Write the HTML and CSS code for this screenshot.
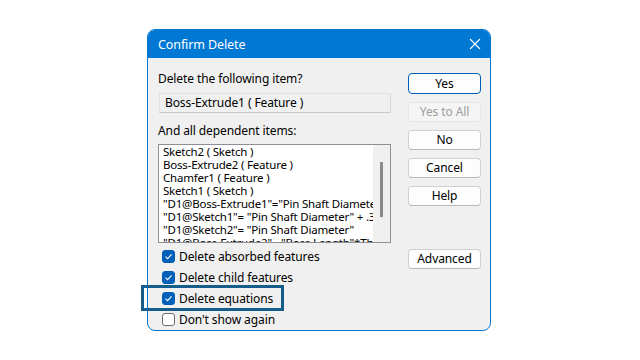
FILE: index.html
```html
<!DOCTYPE html>
<html>
<head>
<meta charset="utf-8">
<link rel="stylesheet" href="styles.css">
</head>
<body>
<div class="stage">
  <div class="dialog">
    <div class="titlebar">
      <span class="title">Confirm Delete</span>
      <svg class="close" width="12" height="12" viewBox="0 0 12 12"><path d="M1 1L11 11M11 1L1 11" stroke="#fff" stroke-width="1.1" fill="none"/></svg>
    </div>
    <div class="body">
      <div class="left">
        <div class="label first">Delete the following item?</div>
        <div class="itembox">Boss-Extrude1 ( Feature )</div>
        <div class="label second">And all dependent items:</div>
        <div class="listbox">
          <div class="lines">
            <div>Sketch2 ( Sketch )</div>
            <div>Boss-Extrude2 ( Feature )</div>
            <div>Chamfer1 ( Feature )</div>
            <div>Sketch1 ( Sketch )</div>
            <div>"D1@Boss-Extrude1"="Pin Shaft Diameter"</div>
            <div>"D1@Sketch1"= "Pin Shaft Diameter" + .3</div>
            <div>"D1@Sketch2"= "Pin Shaft Diameter"</div>
            <div>"D1@Boss-Extrude2"= "Boss Length"*The</div>
          </div>
          <div class="scroll"><div class="thumb"></div></div>
        </div>
        <div class="checks">
          <label class="check"><span class="box on"><svg width="9" height="9" viewBox="0 0 9 9"><path d="M1.5 4.6L3.6 6.6L7.6 2.4" stroke="#fff" stroke-width="1.1" fill="none"/></svg></span>Delete absorbed features</label>
          <label class="check"><span class="box on"><svg width="9" height="9" viewBox="0 0 9 9"><path d="M1.5 4.6L3.6 6.6L7.6 2.4" stroke="#fff" stroke-width="1.1" fill="none"/></svg></span>Delete child features</label>
          <label class="check"><span class="box on"><svg width="9" height="9" viewBox="0 0 9 9"><path d="M1.5 4.6L3.6 6.6L7.6 2.4" stroke="#fff" stroke-width="1.1" fill="none"/></svg></span>Delete equations</label>
          <label class="check"><span class="box"></span>Don't show again</label>
        </div>
      </div>
      <div class="right">
        <div class="btn default">Yes</div>
        <div class="btn disabled">Yes to All</div>
        <div class="btn">No</div>
        <div class="btn">Cancel</div>
        <div class="btn">Help</div>
        <div class="btn advanced">Advanced</div>
      </div>
    </div>
  </div>
  <div class="highlight"></div>
</div>
</body>
</html>
```
FILE: styles.css
```css
html, body {
  margin: 0;
  padding: 0;
  background: #ffffff;
  width: 640px;
  height: 360px;
  overflow: hidden;
}
body {
  font-family: "Noto Sans", "Open Sans", sans-serif;
  font-size: 12px;
  color: #000;
}
.stage {
  position: relative;
  padding: 29px 0 0 147px;
}
.dialog {
  width: 344px;
  height: 302px;
  box-sizing: border-box;
  border: 1px solid #0078d4;
  border-radius: 8px;
  background: #f0f0f0;
  overflow: hidden;
  display: flex;
  flex-direction: column;
}
.titlebar {
  height: 28px;
  background: #0078d4;
  display: flex;
  align-items: center;
  justify-content: space-between;
  padding: 0 9px 0 10px;
  color: #fff;
  flex-shrink: 0;
}
.title {
  font-size: 12.5px;
  letter-spacing: -0.1px;
}
.close {
  display: block;
}
.body {
  display: flex;
  padding: 0 0 0 10px;
}
.left {
  width: 233px;
  display: flex;
  flex-direction: column;
}
.label {
  height: 16px;
  line-height: 16px;
  letter-spacing: -0.1px;
}
.label.first {
  margin-top: 13px;
  margin-bottom: 6px;
}
.label.second {
  margin-top: 10px;
  margin-bottom: 5px;
}
.itembox {
  height: 20px;
  box-sizing: border-box;
  border: 1px solid #e0e0e0;
  border-bottom-color: #c8c8c8;
  border-right-color: #d8d8d8;
  background: #f0f0f0;
  padding-left: 5px;
  line-height: 18px;
  margin-left: 1px;
  width: 232px;
  letter-spacing: -0.1px;
}
.listbox {
  height: 99px;
  box-sizing: border-box;
  border: 1px solid #8e8f94;
  background: #fff;
  display: flex;
  overflow: hidden;
}
.lines {
  flex: 1;
  padding: 0 0 0 4px;
  font-size: 11.5px;
  line-height: 13px;
  white-space: nowrap;
  overflow: hidden;
  letter-spacing: -0.2px;
}
.scroll {
  width: 17px;
  background: #f0f0f0;
  position: relative;
}
.thumb {
  width: 3px;
  height: 55px;
  background: #8a8a8a;
  margin: 17px 0 0 7px;
}
.checks {
  display: flex;
  flex-direction: column;
  margin-top: 3px;
}
.check {
  height: 21px;
  display: flex;
  align-items: center;
  padding-left: 4px;
  letter-spacing: -0.1px;
}
.box {
  width: 13px;
  height: 13px;
  box-sizing: border-box;
  border-radius: 3px;
  border: 1px solid #6c6c6c;
  background: #fff;
  margin-right: 4px;
  display: flex;
  align-items: center;
  justify-content: center;
}
.box.on {
  background: #005fb8;
  border-color: #005fb8;
}
.box svg {
  display: block;
}
.right {
  margin-left: 17px;
  padding-top: 15px;
  display: flex;
  flex-direction: column;
  gap: 8px;
  width: 73px;
}
.btn {
  height: 20px;
  box-sizing: border-box;
  border: 1px solid #d0d0d0;
  border-bottom-color: #b8b8b8;
  border-radius: 4px;
  background: #fdfdfd;
  text-align: center;
  line-height: 18px;
  letter-spacing: -0.1px;
}
.btn.default {
  border: 1px solid #005fb8;
  height: 21px;
  line-height: 19px;
}
.btn.disabled {
  background: #f5f5f5;
  border-color: #e5e5e5;
  color: #9d9d9d;
}
.btn.advanced {
  margin-top: 35px;
}
.highlight {
  position: absolute;
  left: 141px;
  top: 285px;
  width: 143px;
  height: 26px;
  box-sizing: border-box;
  border: 3px solid #155d8b;
}
```
